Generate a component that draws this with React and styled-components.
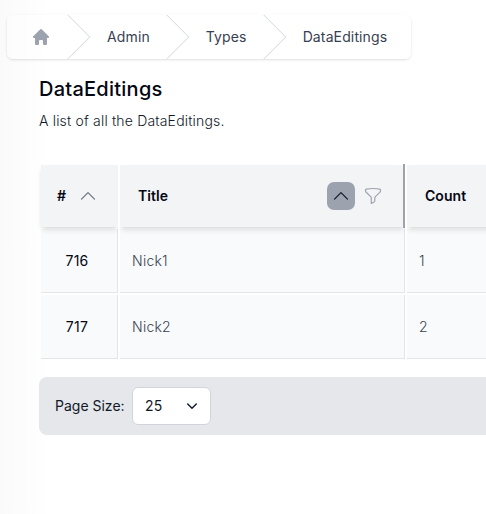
import React from 'react';
import styled, { createGlobalStyle } from 'styled-components';

const GlobalStyle = createGlobalStyle`
  *, *::before, *::after { box-sizing: border-box; }
  body {
    margin: 0;
    overflow: hidden;
    background: #fff;
    font-family: Inter, sans-serif;
    font-size: 14px;
    line-height: 20px;
    letter-spacing: 0.16px;
    color: #111827;
  }
  h1, p { margin: 0; }
`;

const Page = styled.main`
  height: 514px;
  padding: 15px 0 0 7px;
  overflow: hidden;
  background: linear-gradient(to right, #fafafa 0, #fff 50px);
`;

const Breadcrumb = styled.nav`
  display: flex;
  width: 404px;
  height: 44px;
  padding: 0 24px;
  gap: 16px;
  background: linear-gradient(to right, #fcfcfc 0, #fff 40px);
  border-radius: 6px;
  box-shadow: 0 1px 3px rgba(0, 0, 0, 0.1), 0 1px 2px -1px rgba(0, 0, 0, 0.1);
  letter-spacing: 0.13px;
`;

const Crumb = styled.a`
  display: flex;
  align-items: center;
  gap: 16px;
  color: ${(p) => (p.$home ? '#9ca3af' : '#374151')};
  white-space: nowrap;
`;

const Separator = styled.svg`
  width: 24px;
  height: 44px;
  flex: none;
  color: #d1d5db;
`;

const Content = styled.section`
  padding-left: 32px;
`;

const Heading = styled.h1`
  margin-top: 16px;
  font-size: 20px;
  line-height: 28px;
  font-weight: 500;
  letter-spacing: 0.25px;
  color: #030712;
`;

const Description = styled.p`
  margin-top: 8px;
  font-weight: 300;
  letter-spacing: 0.18px;
`;

const Table = styled.div`
  display: grid;
  grid-template-columns: 77px 285px 200px;
  grid-template-rows: 62px 64px 64px;
  gap: 2px;
  margin: 34px 0 0 2px;
`;

const HeaderCell = styled.div`
  position: relative;
  display: flex;
  align-items: center;
  padding: 0 ${(p) => p.$right || 0}px 0 ${(p) => p.$left}px;
  background: #f3f4f6;
  box-shadow: 0 4px 6px -1px rgba(0, 0, 0, 0.1), 0 2px 4px -2px rgba(0, 0, 0, 0.1);
  clip-path: inset(-1px 0 -10px ${(p) => (p.$first ? '-6px' : '0')});
  font-weight: 600;
  letter-spacing: 0.04px;
  color: #030712;
`;

const Tools = styled.div`
  display: flex;
  align-items: center;
  gap: 8px;
  margin-left: auto;
`;

const SortButton = styled.button`
  display: grid;
  place-items: center;
  width: 28px;
  height: 28px;
  padding: 0;
  border: 0;
  border-radius: 7px;
  background: ${(p) => (p.$active ? '#9ca3af' : 'transparent')};
  color: ${(p) => (p.$active ? '#111827' : '#6b7280')};
`;

const ResizeHandle = styled.span`
  position: absolute;
  top: -1px;
  right: 0;
  width: 2px;
  height: 64px;
  background: #9ca3af;
`;

const Cell = styled.div`
  display: flex;
  align-items: center;
  justify-content: ${(p) => (p.$id ? 'center' : 'flex-start')};
  padding: 0 ${(p) => (p.$id ? 4 : 12)}px 0 ${(p) => (p.$id ? 0 : 12)}px;
  border-right: 1px solid #e5e5e5;
  border-bottom: 1px solid #e5e5e5;
  background: #f9fafb;
  font-weight: ${(p) => (p.$id ? 400 : 300)};
  letter-spacing: 0.25px;
  color: ${(p) => (p.$id ? '#030712' : '#374151')};
`;

const Pager = styled.footer`
  display: flex;
  align-items: center;
  gap: 8px;
  height: 58px;
  margin-top: 18px;
  padding-left: 16px;
  border-radius: 8px 0 0 8px;
  background: #e5e7eb;
`;

const PagerLabel = styled.span`
  width: 69px;
  white-space: nowrap;
  letter-spacing: 0;
`;

const PageSize = styled.button`
  display: flex;
  align-items: center;
  justify-content: space-between;
  width: 79px;
  height: 38px;
  padding: 0 11px 0 12px;
  border: 1px solid #d1d5db;
  border-radius: 6px;
  background: #fff;
  color: #111827;
  font: inherit;
  letter-spacing: inherit;
`;

const ChevronUp = () => (
  <svg width="16" height="16" viewBox="0 0 16 16" fill="none" stroke="currentColor" strokeWidth="1.2" strokeLinecap="round" strokeLinejoin="round">
    <path d="M1.5 11.2 8 4.7l6.5 6.5" />
  </svg>
);

const Funnel = () => (
  <svg width="20" height="20" viewBox="0 0 20 20" fill="none" stroke="#9ca3af" strokeWidth="1.2" strokeLinejoin="round">
    <path d="M10 2.5C12.3 2.5 14.5 2.7 16.7 3.1Q17.5 3.2 17.5 3.9V4.7Q17.5 5.6 16.8 6.3L12.4 10.7Q11.8 11.3 11.8 12.2V14.6Q11.8 15.7 10.8 16.2L8.3 17.5V12.2Q8.3 11.3 7.7 10.7L3.2 6.3Q2.5 5.6 2.5 4.7V3.9Q2.5 3.2 3.3 3.1C5.5 2.7 7.7 2.5 10 2.5Z" />
  </svg>
);

const Home = () => (
  <svg width="20" height="20" viewBox="0 0 20 20" fill="currentColor">
    <path d="M9.293 2.293a1 1 0 0 1 1.414 0l7 7A1 1 0 0 1 17 11h-1v6a1 1 0 0 1-1 1h-2a1 1 0 0 1-1-1v-3a1 1 0 0 0-1-1H9a1 1 0 0 0-1 1v3a1 1 0 0 1-1 1H5a1 1 0 0 1-1-1v-6H3a1 1 0 0 1-.707-1.707l7-7Z" />
  </svg>
);

const CrumbArrow = () => (
  <Separator viewBox="0 0 24 44" fill="currentColor" preserveAspectRatio="none">
    <path d="M.293 0l22 22-22 22h1l22-22-22-22H.293z" />
  </Separator>
);

const rows = [
  { id: 716, title: 'Nick1', count: 1 },
  { id: 717, title: 'Nick2', count: 2 },
];

export default function App() {
  return (
    <>
      <GlobalStyle />
      <Page>
        <Breadcrumb>
          <Crumb $home><Home /></Crumb>
          {['Admin', 'Types', 'DataEditings'].map((name) => (
            <Crumb key={name}><CrumbArrow />{name}</Crumb>
          ))}
        </Breadcrumb>
        <Content>
          <Heading>DataEditings</Heading>
          <Description>A list of all the DataEditings.</Description>
          <Table>
            <HeaderCell $left={16} $right={16} $first>
              #
              <Tools><SortButton><ChevronUp /></SortButton></Tools>
            </HeaderCell>
            <HeaderCell $left={18} $right={22}>
              Title
              <Tools>
                <SortButton $active><ChevronUp /></SortButton>
                <Funnel />
              </Tools>
              <ResizeHandle />
            </HeaderCell>
            <HeaderCell $left={18}>Count</HeaderCell>
            {rows.map((row) => (
              <React.Fragment key={row.id}>
                <Cell $id>{row.id}</Cell>
                <Cell>{row.title}</Cell>
                <Cell>{row.count}</Cell>
              </React.Fragment>
            ))}
          </Table>
          <Pager>
            <PagerLabel>Page Size:</PagerLabel>
            <PageSize>
              25
              <svg width="14" height="14" viewBox="0 0 14 14" fill="none" stroke="currentColor" strokeWidth="1.4" strokeLinecap="round" strokeLinejoin="round">
                <path d="m2.7 5 4.3 4.3L11.3 5" />
              </svg>
            </PageSize>
          </Pager>
        </Content>
      </Page>
    </>
  );
}
